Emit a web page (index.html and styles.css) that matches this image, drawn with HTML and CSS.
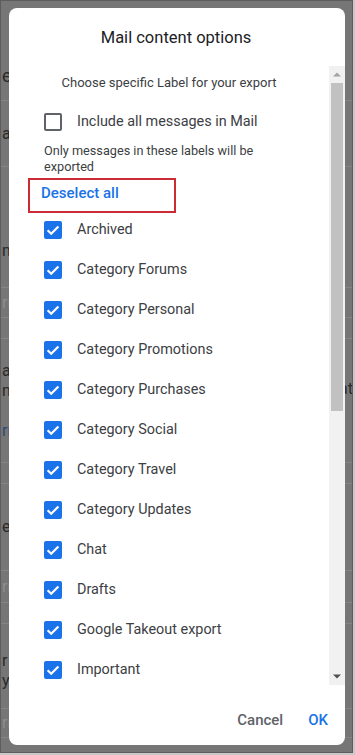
FILE: index.html
```html
<!DOCTYPE html>
<html lang="en">
<head>
<meta charset="utf-8">
<title>Mail content options</title>
<link rel="stylesheet" href="styles.css">
</head>
<body>
<div class="frame">
  <div class="bg">
    <div class="bgrow h100"><span class="frag dark f17">ec</span></div>
    <div class="bgrow h66"><span class="frag dark">a</span></div>
    <div class="bgrow h121 end"><span class="frag dark">m</span></div>
    <div class="bgrow h30"><span class="frag light">rn</span></div>
    <div class="bgrow h21"></div>
    <div class="bgrow h124 stack"><span class="frag dark">ar</span><span class="frag dark">m</span><span class="frag blue">rn</span><span class="frag right dark">at</span></div>
    <div class="bgrow h21"></div>
    <div class="bgrow h87"><span class="frag dark">er</span></div>
    <div class="bgrow h32"><span class="frag light">rn</span></div>
    <div class="bgrow h21"></div>
    <div class="bgrow h85 stack2"><span class="frag dark">r</span><span class="frag dark">ye</span></div>
    <div class="bgrow h29"><span class="frag light">rn</span></div>
  </div>

  <div class="dialog">
    <h1 class="title">Mail content options</h1>
    <div class="scroll">
      <div class="content">
        <p class="subtitle">Choose specific Label for your export</p>
        <div class="row">
          <span class="cb"></span>
          <span class="label">Include all messages in Mail</span>
        </div>
        <p class="desc">Only messages in these labels will be exported</p>
        <div class="deselect">
          <span class="link">Deselect all</span>
          <span class="highlight"></span>
        </div>
        <div class="row"><span class="cb on"><svg viewBox="0 0 18 18"><path d="M3.6 9.3l3.6 3.5 7.2-7.3"/></svg></span><span class="label">Archived</span></div>
        <div class="row"><span class="cb on"><svg viewBox="0 0 18 18"><path d="M3.6 9.3l3.6 3.5 7.2-7.3"/></svg></span><span class="label">Category Forums</span></div>
        <div class="row"><span class="cb on"><svg viewBox="0 0 18 18"><path d="M3.6 9.3l3.6 3.5 7.2-7.3"/></svg></span><span class="label">Category Personal</span></div>
        <div class="row"><span class="cb on"><svg viewBox="0 0 18 18"><path d="M3.6 9.3l3.6 3.5 7.2-7.3"/></svg></span><span class="label">Category Promotions</span></div>
        <div class="row"><span class="cb on"><svg viewBox="0 0 18 18"><path d="M3.6 9.3l3.6 3.5 7.2-7.3"/></svg></span><span class="label">Category Purchases</span></div>
        <div class="row"><span class="cb on"><svg viewBox="0 0 18 18"><path d="M3.6 9.3l3.6 3.5 7.2-7.3"/></svg></span><span class="label">Category Social</span></div>
        <div class="row"><span class="cb on"><svg viewBox="0 0 18 18"><path d="M3.6 9.3l3.6 3.5 7.2-7.3"/></svg></span><span class="label">Category Travel</span></div>
        <div class="row"><span class="cb on"><svg viewBox="0 0 18 18"><path d="M3.6 9.3l3.6 3.5 7.2-7.3"/></svg></span><span class="label">Category Updates</span></div>
        <div class="row"><span class="cb on"><svg viewBox="0 0 18 18"><path d="M3.6 9.3l3.6 3.5 7.2-7.3"/></svg></span><span class="label">Chat</span></div>
        <div class="row"><span class="cb on"><svg viewBox="0 0 18 18"><path d="M3.6 9.3l3.6 3.5 7.2-7.3"/></svg></span><span class="label">Drafts</span></div>
        <div class="row"><span class="cb on"><svg viewBox="0 0 18 18"><path d="M3.6 9.3l3.6 3.5 7.2-7.3"/></svg></span><span class="label">Google Takeout export</span></div>
        <div class="row"><span class="cb on"><svg viewBox="0 0 18 18"><path d="M3.6 9.3l3.6 3.5 7.2-7.3"/></svg></span><span class="label">Important</span></div>
      </div>
      <div class="scrollbar">
        <span class="sbtn"><svg viewBox="0 0 8 5" class="tri up"><path d="M0 4.5L4 0.5 8 4.5z"/></svg></span>
        <span class="thumb"></span>
        <span class="sfill"></span>
        <span class="sbtn"><svg viewBox="0 0 8 5" class="tri down"><path d="M0 0.5L4 4.5 8 0.5z"/></svg></span>
      </div>
    </div>
    <div class="footer">
      <span class="btn cancel">Cancel</span>
      <span class="btn ok">OK</span>
    </div>
  </div>
</div>
</body>
</html>
```

FILE: styles.css
```css
html, body {
  margin: 0;
  padding: 0;
  background: #c9c9c9;
}

body {
  font-family: Roboto, "Noto Sans", "Liberation Sans", sans-serif;
  width: 355px;
  height: 755px;
  overflow: hidden;
}

.frame {
  position: relative;
  box-sizing: border-box;
  width: 353px;
  height: 753px;
  border: 1px solid #5d5d5d;
  background: #767676;
  overflow: hidden;
}

/* dimmed page behind the dialog */
.bg {
  display: flex;
  flex-direction: column;
}

.bgrow {
  display: flex;
  align-items: flex-end;
  justify-content: space-between;
  border-bottom: 1px solid #858585;
  box-sizing: border-box;
  padding-bottom: 14px;
}

.bgrow.stack, .bgrow.stack2 {
  flex-direction: column;
  align-items: stretch;
  justify-content: center;
  padding-bottom: 0;
}

.h100 { height: 100px; padding-bottom: 14px; }
.h66 { height: 66px; align-items: center; padding-bottom: 0; }
.h121 { height: 121px; padding-bottom: 26px; }
.h30 { height: 30px; align-items: center; padding-bottom: 0; }
.h21 { height: 21px; }
.h124 { height: 124px; }
.h87 { height: 87px; align-items: center; padding-bottom: 0; }
.h32 { height: 32px; align-items: center; padding-bottom: 0; }
.h85 { height: 85px; padding-top: 10px; }
.h29 { height: 29px; align-items: center; padding-bottom: 0; }

.frag {
  display: block;
  margin-left: 1px;
  font-size: 16px;
  line-height: 20px;
  white-space: nowrap;
}

.frag.f17 { font-size: 18px; }
.frag.dark { color: #2a2a2a; }
.frag.light { color: #8e8e8e; }
.frag.blue { color: #2a4a7c; }
.frag.right { position: absolute; left: 337px; top: 378px; }

.stack .frag:nth-child(3) { margin-top: 20px; }

/* dialog */
.dialog {
  position: absolute;
  left: 8px;
  top: 7px;
  width: 336px;
  height: 737px;
  background: #fff;
  border-radius: 8px;
  display: flex;
  flex-direction: column;
  overflow: hidden;
}

.title {
  margin: 0;
  padding-top: 18px;
  font-size: 16.5px;
  line-height: 24px;
  font-weight: 400;
  color: #202124;
  text-align: center;
  padding-right: 2px;
}

.scroll {
  margin-top: 16px;
  height: 619px;
  display: flex;
}

.content {
  flex: 1;
  overflow: hidden;
  padding-left: 35px;
}

.subtitle {
  margin: 9px 0 0 -35px;
  font-size: 13px;
  line-height: 16px;
  color: #3c4043;
  text-align: center;
}

.row {
  display: flex;
  align-items: center;
  height: 40px;
}

.subtitle + .row { margin-top: 11px; }

.cb {
  box-sizing: border-box;
  width: 18px;
  height: 18px;
  flex: none;
  border: 2px solid #5f6368;
  border-radius: 2px;
  margin-right: 15px;
}

.cb.on {
  border: none;
  background: #1a73e8;
  display: flex;
}

.cb svg {
  width: 18px;
  height: 18px;
}

.cb path {
  fill: none;
  stroke: #fff;
  stroke-width: 2.2;
}

.label {
  font-size: 14.4px;
  line-height: 20px;
  color: #3c4043;
  white-space: nowrap;
}

.desc {
  margin: 1px 0 0;
  width: 235px;
  font-size: 12.7px;
  line-height: 16px;
  color: #3c4043;
}

.deselect {
  position: relative;
  height: 35px;
  display: flex;
  align-items: center;
  margin-left: -3px;
}

.link {
  font-size: 15px;
  font-weight: 500;
  color: #1a73e8;
  line-height: 20px;
}

.highlight {
  position: absolute;
  left: -13px;
  top: 3px;
  width: 148px;
  height: 35px;
  box-sizing: border-box;
  border: 2px solid #cc2b36;
}

/* scrollbar */
.scrollbar {
  width: 16px;
  flex: none;
  background: #f1f1f1;
  display: flex;
  flex-direction: column;
}

.sbtn {
  height: 17px;
  flex: none;
  display: flex;
  align-items: center;
  justify-content: center;
}

.tri {
  width: 8px;
  height: 5px;
}

.tri.up { fill: #a3a3a3; }
.tri.down { fill: #505050; }

.thumb {
  height: 328px;
  margin: 0 2px;
  background: #c1c1c1;
  flex: none;
}

.sfill { flex: 1; }

/* footer */
.footer {
  flex: 1;
  display: flex;
  justify-content: flex-end;
  align-items: flex-start;
  padding-top: 25px;
  padding-right: 9px;
  gap: 9px;
}

.btn {
  padding: 0 8px;
  font-size: 15px;
  line-height: 20px;
  font-weight: 500;
}

.cancel { color: #5f6368; }
.ok { color: #1a73e8; }
```
